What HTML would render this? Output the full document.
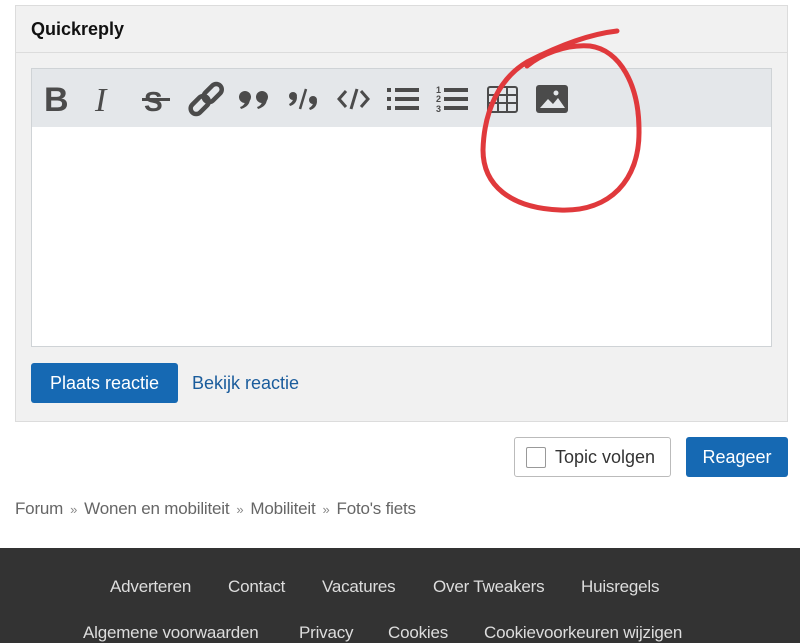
<!DOCTYPE html>
<html><head><meta charset="utf-8"><style>
body{margin:0;width:800px;height:643px;overflow:hidden;background:#fff;font-family:"Liberation Sans",Arial,sans-serif;position:relative}
.panel{position:absolute;left:15px;top:5px;width:771px;height:415px;background:#f1f1f1;border:1px solid #dcdcdc}
.hdr{height:46px;border-bottom:1px solid #dcdcdc;font-weight:bold;font-size:18px;line-height:46px;padding-left:15px;color:#111}
.ed{position:absolute;left:15px;top:62px;width:739px;height:277px;background:#fff;border:1px solid #cfd3d6}
.tb{height:58px;background:#e4e7ea}
.btn{position:absolute;background:#1669b3;color:#fff;border-radius:3px;font-size:18px;text-align:center}
a{color:#1a5c9c;text-decoration:none}
.foot{position:absolute;left:0;top:548px;width:800px;height:95px;background:#333;color:#ddd;font-size:17px;letter-spacing:-0.2px}
.foot span{position:absolute}
.bc{position:absolute;left:15px;top:499px;font-size:17px;color:#666;letter-spacing:-0.2px}
.bc i{font-style:normal;font-size:13px;margin:0 7px;color:#888}
</style></head><body>
<div class="panel">
<div class="hdr">Quickreply</div>
<div class="ed"><div class="tb">
<svg width="739" height="58" viewBox="31 68 739 58" style="display:block">
<g fill="#4b4b4b" stroke="#4b4b4b">
<text x="43" y="110" font-size="34" font-weight="bold" stroke="none" font-family="Liberation Sans">B</text>
<text x="94" y="110" font-size="34" font-style="italic" stroke="none" font-family="Liberation Serif">I</text>
<text x="143" y="110" font-size="28" font-weight="bold" stroke="none" font-family="Liberation Sans">S</text>
<rect x="141" y="97" width="28" height="3" stroke="none"/>
<g fill="none" stroke-width="4.5" stroke-linecap="round"><rect x="188" y="99" width="21" height="11" rx="5.5" transform="rotate(-45 198 104)"/><rect x="201" y="87" width="21" height="11" rx="5.5" transform="rotate(-45 211 92)"/></g>
<g stroke="none"><circle cx="244" cy="96" r="6"/><path d="M249 97c0 6-3 9-9 11l-1-2c3-1 5-3 5-6z"/><circle cx="261" cy="96" r="6"/><path d="M266 97c0 6-3 9-9 11l-1-2c3-1 5-3 5-6z"/>
<circle cx="292" cy="95" r="4"/><path d="M296 96c0 5-3 8-7 9l-1-2c2-1 4-3 4-5z"/>
<circle cx="312" cy="99" r="4"/><path d="M316 100c0 5-3 8-7 9l-1-2c2-1 4-3 4-5z"/></g>
<line x1="299" y1="108" x2="305" y2="88" stroke-width="2.5"/>
<g fill="none" stroke-width="3"><path d="M345 90l-7 8 7 8M360 90l7 8-7 8M356 88l-6 20"/></g>
<g stroke="none"><rect x="386" y="87" width="4" height="4"/><rect x="386" y="96" width="4" height="4"/><rect x="386" y="105" width="4" height="4"/><rect x="394" y="87" width="24" height="4"/><rect x="394" y="96" width="24" height="4"/><rect x="394" y="105" width="24" height="4"/>
<text x="435" y="92" font-size="9" font-weight="bold">1</text><text x="435" y="101" font-size="9" font-weight="bold">2</text><text x="435" y="111" font-size="9" font-weight="bold">3</text>
<rect x="443" y="87" width="24" height="4"/><rect x="443" y="96" width="24" height="4"/><rect x="443" y="105" width="24" height="4"/></g>
<g fill="none" stroke-width="2"><rect x="487" y="86" width="29" height="25" rx="2"/><path d="M487 94h29M487 102h29M497 86v25M506 86v25"/></g>
<rect x="535" y="84" width="32" height="28" rx="3" stroke="none"/>
<path d="M539 107l8-9 5 5 5-6 7 10z" fill="#e4e7ea" stroke="none"/>
<circle cx="555" cy="92" r="2.5" fill="#e4e7ea" stroke="none"/>
</g></svg></div></div>
<div class="btn" style="left:15px;top:357px;width:147px;height:40px;line-height:40px">Plaats reactie</div>
<a style="position:absolute;left:176px;top:367px;font-size:18px">Bekijk reactie</a>
</div>
<div style="position:absolute;left:514px;top:437px;width:155px;height:38px;border:1px solid #bbb;border-radius:3px;background:#fff;font-size:18px;color:#333;line-height:38px"><span style="position:absolute;left:11px;top:9px;width:18px;height:19px;border:1px solid #999;border-radius:2px"></span><span style="position:absolute;left:40px">Topic volgen</span></div>
<div class="btn" style="left:686px;top:437px;width:102px;height:40px;line-height:40px">Reageer</div>
<div class="bc">Forum<i>»</i>Wonen en mobiliteit<i>»</i>Mobiliteit<i>»</i>Foto's fiets</div>
<div class="foot">
<span style="left:110px;top:29px">Adverteren</span><span style="left:228px;top:29px">Contact</span><span style="left:322px;top:29px">Vacatures</span><span style="left:433px;top:29px">Over Tweakers</span><span style="left:581px;top:29px">Huisregels</span>
<span style="left:83px;top:75px">Algemene voorwaarden</span><span style="left:299px;top:75px">Privacy</span><span style="left:388px;top:75px">Cookies</span><span style="left:484px;top:75px">Cookievoorkeuren wijzigen</span>
</div>
<svg width="800" height="643" style="position:absolute;left:0;top:0">
<path d="M617 31C590 34 560 45 527 62C500 78 484 110 483 150C483 185 510 208 560 210C610 212 640 180 639 130C639 85 620 50 590 46C565 44 540 55 527 66" fill="none" stroke="#e0393c" stroke-width="5" stroke-linecap="round"/>
</svg>
</body></html>
